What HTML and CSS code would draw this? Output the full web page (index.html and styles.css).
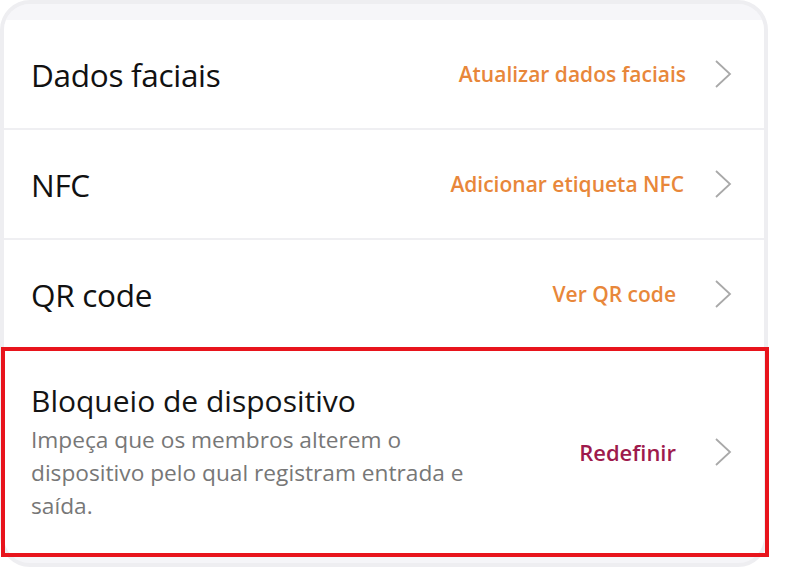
FILE: index.html
```html
<!DOCTYPE html>
<html lang="pt">
<head>
<meta charset="utf-8">
<link rel="stylesheet" href="styles.css">
</head>
<body>
<div class="frame">
  <div class="top-strip"></div>
  <div class="row">
    <span class="label">Dados faciais</span>
    <span class="action">
      <span class="action-text orange gap-s">Atualizar dados faciais</span>
      <svg class="chev" viewBox="0 0 18 28" width="18" height="28"><path d="M2 1 L16 14 L2 27" fill="none" stroke="#a9a9a9" stroke-width="1.8"/></svg>
    </span>
  </div>
  <div class="divider"></div>
  <div class="row">
    <span class="label">NFC</span>
    <span class="action">
      <span class="action-text orange gap-m">Adicionar etiqueta NFC</span>
      <svg class="chev" viewBox="0 0 18 28" width="18" height="28"><path d="M2 1 L16 14 L2 27" fill="none" stroke="#a9a9a9" stroke-width="1.8"/></svg>
    </span>
  </div>
  <div class="divider"></div>
  <div class="row">
    <span class="label">QR code</span>
    <span class="action">
      <span class="action-text orange gap-l">Ver QR code</span>
      <svg class="chev" viewBox="0 0 18 28" width="18" height="28"><path d="M2 1 L16 14 L2 27" fill="none" stroke="#a9a9a9" stroke-width="1.8"/></svg>
    </span>
  </div>
  <div class="row row-tall">
    <div class="texts">
      <div class="title">Bloqueio de dispositivo</div>
      <div class="desc">Impeça que os membros alterem o dispositivo pelo qual registram entrada e saída.</div>
    </div>
    <span class="action">
      <span class="action-text crimson gap-l">Redefinir</span>
      <svg class="chev" viewBox="0 0 18 28" width="18" height="28"><path d="M2 1 L16 14 L2 27" fill="none" stroke="#a9a9a9" stroke-width="1.8"/></svg>
    </span>
  </div>
</div>
<div class="highlight"></div>
</body>
</html>
```

FILE: styles.css
```css
html, body {
  margin: 0;
  padding: 0;
  background: #ffffff;
}
body {
  position: relative;
  font-family: "Open Sans", "Noto Sans", sans-serif;
  width: 796px;
  height: 570px;
  overflow: hidden;
}
.frame {
  box-sizing: border-box;
  width: 768px;
  height: 567px;
  border: 4px solid #eeeef1;
  border-radius: 30px;
  background: #f5f5f8;
  overflow: hidden;
  display: flex;
  flex-direction: column;
}
.top-strip {
  height: 16px;
  background: #f6f6f9;
}
.row {
  height: 108px;
  flex-shrink: 0;
  background: #ffffff;
  display: flex;
  align-items: center;
  justify-content: space-between;
  padding: 0 32px 0 27px;
}
.divider {
  height: 2px;
  flex-shrink: 0;
  background: #efeff2;
}
.label {
  font-size: 31.5px;
  color: #111111;
  letter-spacing: -0.3px;
}
.action {
  display: flex;
  align-items: center;
  gap: 26px;
}
.action-text {
  font-size: 21px;
  font-weight: 600;
}
.gap-s { margin-right: 2px; }
.gap-m { margin-right: 4px; }
.gap-l { margin-right: 12px; }
.orange { color: #e8873a; }
.crimson { color: #9e1a4c; font-size: 22px; }
.chev { display: block; }
.row-tall {
  height: 208px;
}
.texts {
  display: flex;
  flex-direction: column;
}
.title {
  font-size: 30px;
  color: #141414;
  line-height: 38px;
  margin-bottom: 3px;
}
.desc {
  font-size: 22.7px;
  color: #777777;
  line-height: 33px;
  width: 445px;
}
.highlight {
  position: absolute;
  left: 1px;
  top: 347px;
  width: 768px;
  height: 210px;
  border: 4px solid #e8141c;
  box-sizing: border-box;
}
```
